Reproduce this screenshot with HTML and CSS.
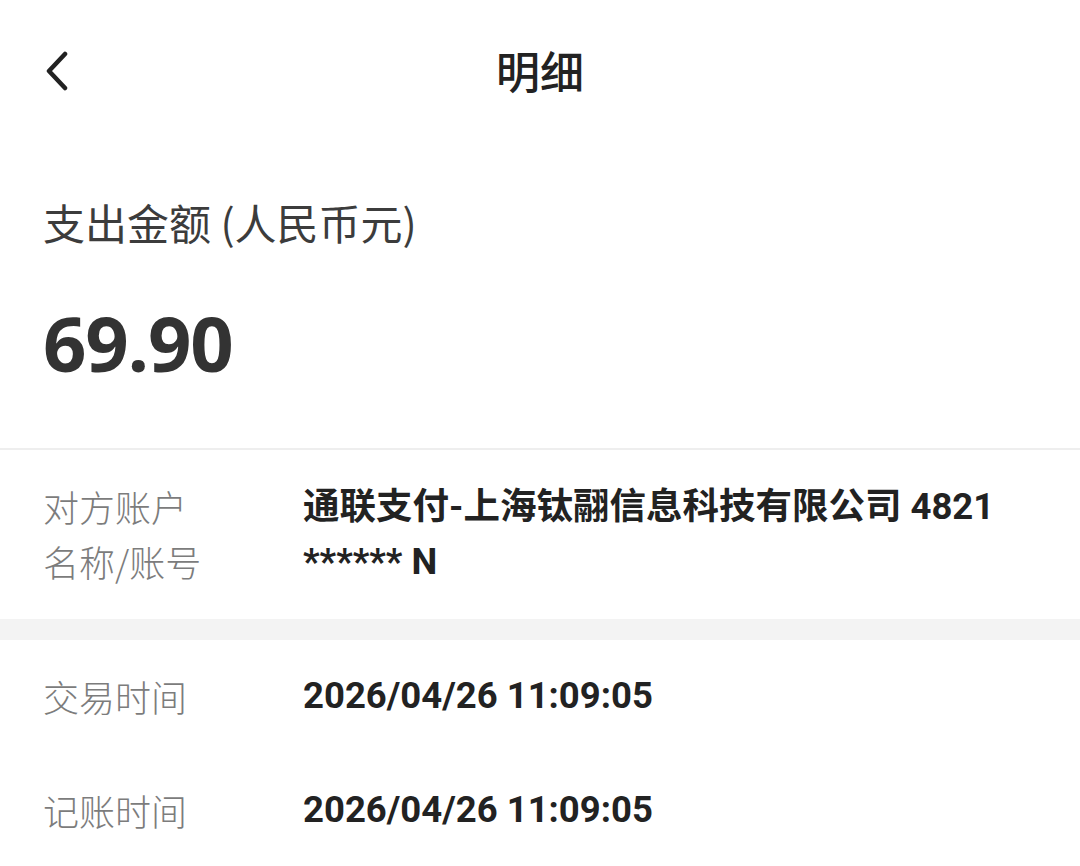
FILE: index.html
```html
<!DOCTYPE html>
<html lang="zh-CN">
<head>
<meta charset="utf-8">
<link rel="stylesheet" href="styles.css">
</head>
<body>
<div class="page">
  <header class="topbar">
    <span class="back">
      <svg width="26" height="40" viewBox="0 0 26 40"><path d="M21 3 L5 20 L21 37" fill="none" stroke="#222" stroke-width="4.5" stroke-linecap="round" stroke-linejoin="round"/></svg>
    </span>
    <h1 class="title">明细</h1>
  </header>
  <section class="amount">
    <div class="amount-label">支出金额 (人民币元)</div>
    <div class="amount-value">69.90</div>
  </section>
  <section class="card">
    <div class="row row-account">
      <div class="label">对方账户<br>名称/账号</div>
      <div class="value">通联支付-上海钛翮信息科技有限公司 4821 ****** N</div>
    </div>
  </section>
  <div class="band"></div>
  <section class="card">
    <div class="row row-time row-first">
      <div class="label">交易时间</div>
      <div class="value">2026/04/26 11:09:05</div>
    </div>
    <div class="row row-time">
      <div class="label">记账时间</div>
      <div class="value">2026/04/26 11:09:05</div>
    </div>
  </section>
</div>
</body>
</html>
```
FILE: styles.css
```css
html, body {
  margin: 0;
  padding: 0;
  background: #ffffff;
}
.page {
  width: 1080px;
  height: 866px;
  overflow: hidden;
  font-family: "Noto Sans CJK SC", "Noto Sans", sans-serif;
  color: #222;
}
.topbar {
  position: relative;
  height: 144px;
  display: flex;
  align-items: center;
  justify-content: center;
}
.back {
  position: absolute;
  left: 44px;
  top: 51px;
  display: block;
  width: 26px;
  height: 40px;
}
.back svg { display: block; }
.title {
  margin: 0 0 4px;
  font-size: 44px;
  font-weight: 500;
  color: #222;
  line-height: 1;
}
.amount {
  padding: 52px 43px 0;
  height: 306px;
  box-sizing: border-box;
  border-bottom: 2px solid #eeeeee;
}
.amount-label {
  font-size: 42px;
  font-weight: 400;
  color: #3c3c3c;
  line-height: 52px;
}
.amount-value {
  margin-top: 55px;
  font-family: "Open Sans", "Noto Sans", sans-serif;
  font-weight: 700;
  font-size: 76px;
  line-height: 80px;
  color: #333;
  letter-spacing: -1.2px;
}
.card {
  background: #fff;
}
.row {
  display: flex;
  padding: 0 43px;
}
.label {
  width: 260px;
  flex: none;
  font-size: 36px;
  font-weight: 300;
  color: #7c7c7c;
}
.value {
  flex: 1;
  font-family: Roboto, "Noto Sans CJK SC", sans-serif;
  font-weight: 700;
  font-size: 36.5px;
  color: #222;
}
.row-account {
  padding-top: 29px;
  height: 169px;
  box-sizing: border-box;
  line-height: 55px;
}
.band {
  height: 21px;
  background: #f3f3f3;
}
.row-time {
  height: 115px;
  align-items: center;
  line-height: 52px;
}
.row-first {
  height: 112px;
}
```
